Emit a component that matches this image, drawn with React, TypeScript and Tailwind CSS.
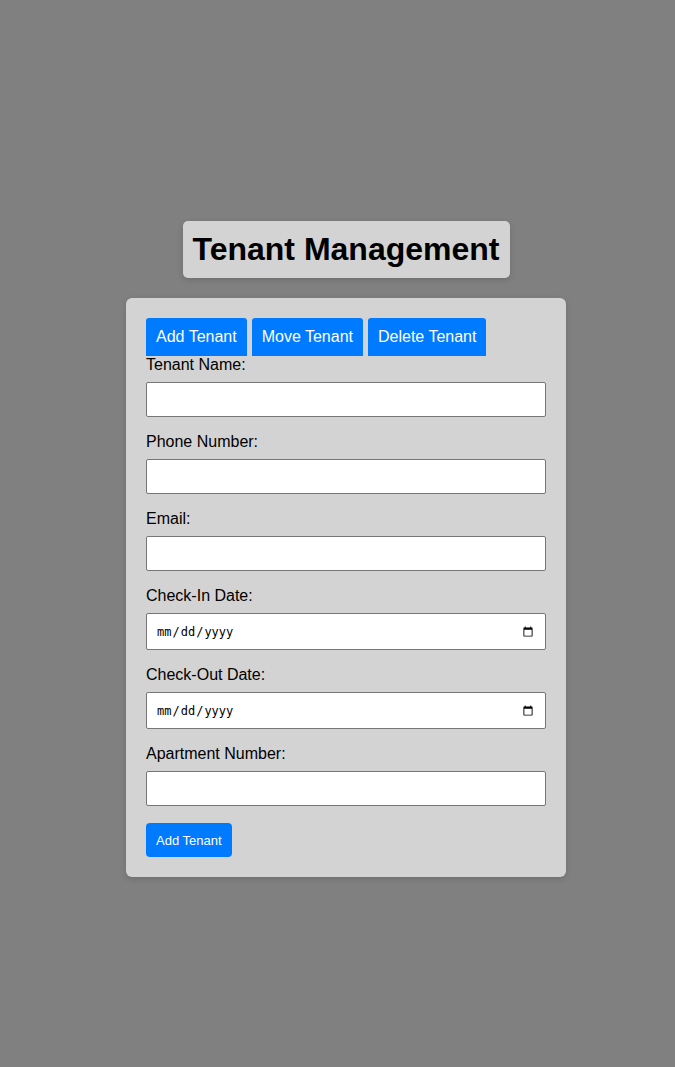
import React, { useState } from 'react'

const fields = [
  { label: 'Tenant Name:', type: 'text' },
  { label: 'Phone Number:', type: 'tel' },
  { label: 'Email:', type: 'email' },
  { label: 'Check-In Date:', type: 'date' },
  { label: 'Check-Out Date:', type: 'date' },
  { label: 'Apartment Number:', type: 'text' },
]

const tabs = ['Add Tenant', 'Move Tenant', 'Delete Tenant']

const App = () => {
  const [tab, setTab] = useState('Add Tenant')

  return (
    <div className="min-h-[1067px] bg-[#808080] flex flex-col items-center pt-[221px] pl-[17px] font-['Liberation_Sans',Arial,sans-serif] text-black">
      <h1 className="bg-[#d3d3d3] rounded-[5px] px-[10px] py-[10px] text-[32px] leading-[37px] font-bold shadow-[0_2px_6px_rgba(0,0,0,0.15)]">
        Tenant Management
      </h1>

      <div className="mt-[20px] w-[440px] bg-[#d3d3d3] rounded-[6px] p-[20px] shadow-[0_2px_6px_rgba(0,0,0,0.15)]">
        <div className="flex gap-[5px]">
          {tabs.map((t) => (
            <button
              key={t}
              onClick={() => setTab(t)}
              className="bg-[#007bff] text-white text-[16px] leading-[18px] px-[10px] py-[10px] rounded-t-[3px]"
            >
              {t}
            </button>
          ))}
        </div>

        <form onSubmit={(e) => e.preventDefault()}>
          {fields.map((f, i) => (
            <div key={f.label} className={i === 0 ? '' : 'mt-[16px]'}>
              <label className="block text-[16px] leading-[18px] mb-[8px]">{f.label}</label>
              {f.type === 'date' ? (
                <input
                  type="date"
                  className="block w-full h-[37px] bg-white border border-[#767676] rounded-[2px] px-[9px] font-['DejaVu_Sans_Mono',monospace] text-[12px]"
                />
              ) : (
                <input
                  type={f.type}
                  className="block w-full h-[35px] bg-white border border-[#767676] rounded-[2px] px-[8px] text-[14px]"
                />
              )}
            </div>
          ))}

          <button
            type="submit"
            className="mt-[17px] h-[34px] bg-[#007bff] text-white text-[13px] leading-[15px] font-medium px-[10px] rounded-[4px]"
          >
            {tab === 'Add Tenant' ? 'Add Tenant' : tab}
          </button>
        </form>
      </div>
    </div>
  )
}

export default App
